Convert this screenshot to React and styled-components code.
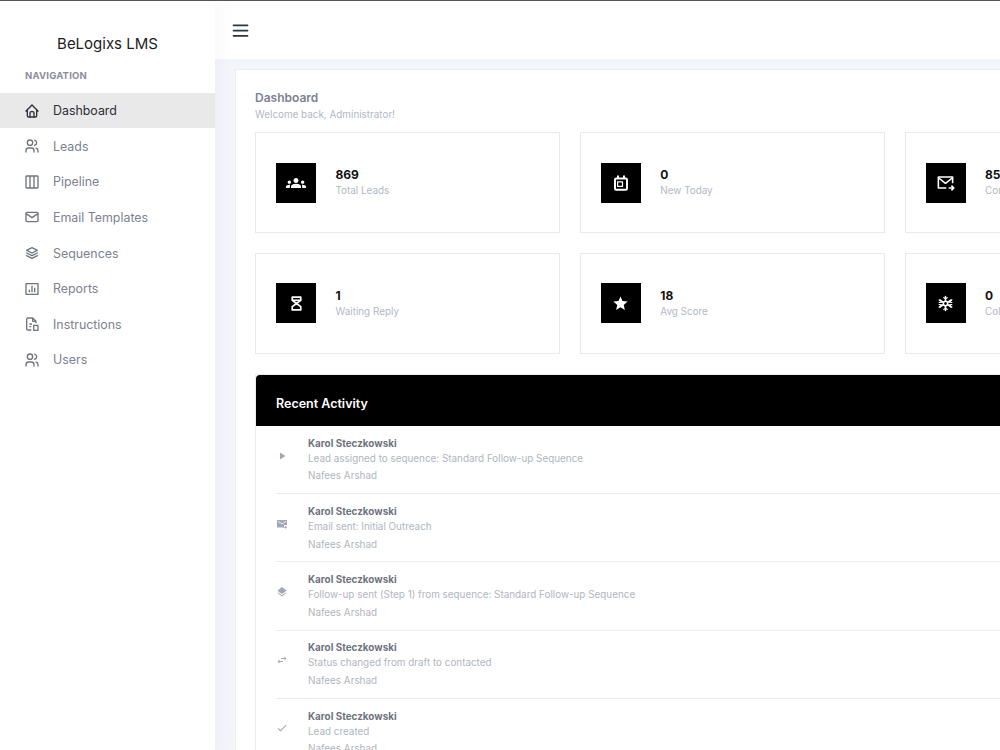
import React from 'react';
import styled, { createGlobalStyle } from 'styled-components';
import {
  TbHome,
  TbUsers,
  TbColumns3,
  TbMail,
  TbStack2,
  TbMenu2,
} from 'react-icons/tb';
import { RiBarChartBoxLine } from 'react-icons/ri';
import {
  MdGroups,
  MdStar,
  MdPlayArrow,
  MdLayers,
  MdSwapHoriz,
  MdCheck,
} from 'react-icons/md';

const GlobalStyle = createGlobalStyle`
  html, body {
    margin: 0;
    height: 100%;
    overflow: hidden;
    background: #f4f4fb;
    font-family: Inter, "Liberation Sans", sans-serif;
  }
  * { box-sizing: border-box; }
`;

const Shell = styled.div`
  display: flex;
  width: 1000px;
  height: 750px;
  overflow: hidden;
  border-top: 1px solid #555;
`;

const Sidebar = styled.aside`
  flex: 0 0 215px;
  background: #fff;
  box-shadow: 0 0 20px rgba(120, 120, 160, 0.08);
  z-index: 1;
`;

const Brand = styled.div`
  padding-top: 33px;
  height: 65px;
  text-align: center;
  font-size: 15px;
  line-height: 20px;
  color: #1c1c22;
`;

const NavTitle = styled.div`
  padding: 3px 25px 0;
  height: 26.9px;
  font-size: 9.5px;
  line-height: 13px;
  font-weight: 700;
  letter-spacing: 0.2px;
  color: #8a8d9c;
`;

const NavItem = styled.div`
  display: flex;
  align-items: center;
  gap: 13px;
  height: 35.6px;
  padding-left: 24px;
  font-size: 12.4px;
  color: ${props => (props.$active ? '#2d2d35' : '#7d8192')};
  background: ${props => (props.$active ? '#e9e9e9' : 'transparent')};
  svg {
    width: 16px;
    height: 16px;
    flex: none;
    color: ${props => (props.$active ? '#2d2d35' : '#70747f')};
  }
`;

const Main = styled.main`
  flex: 1;
  min-width: 0;
`;

const Topbar = styled.header`
  display: flex;
  align-items: center;
  height: 58px;
  padding-left: 14.5px;
  background: #fff;
  color: #2f3247;
  svg {
    width: 21px;
    height: 21px;
  }
`;

const Content = styled.div`
  padding: 10px 0 0 20px;
`;

const Panel = styled.section`
  width: 1300px;
  background: #fff;
  border: 1px solid #ececf2;
  padding: 19px;
`;

const PageTitle = styled.h1`
  margin: 1px 0 0;
  font-size: 12px;
  line-height: 16px;
  font-weight: 600;
  color: #7d8192;
`;

const PageSub = styled.p`
  margin: 1px 0 10.4px;
  font-size: 9.9px;
  line-height: 15px;
  color: #b2b8c4;
`;

const StatGrid = styled.div`
  display: grid;
  grid-template-columns: repeat(4, 304.75px);
  gap: 20px;
`;

const StatCard = styled.div`
  display: flex;
  align-items: center;
  gap: 19.5px;
  height: 100.6px;
  padding: 0 20px;
  border: 1px solid #e9e9e9;
`;

const StatIcon = styled.div`
  display: flex;
  align-items: center;
  justify-content: center;
  width: 40px;
  height: 40px;
  background: #000;
  color: #fff;
  svg {
    width: ${props => props.$size || 18}px;
    height: ${props => props.$size || 18}px;
  }
`;

const StatValue = styled.div`
  font-size: 12px;
  line-height: 16px;
  font-weight: 700;
  color: #111;
`;

const StatLabel = styled.div`
  font-size: 9.9px;
  line-height: 15px;
  color: #b2b8c4;
`;

const Activity = styled.div`
  margin-top: 20px;
  border: 1px solid #ececf2;
`;

const ActivityHead = styled.div`
  height: 51.4px;
  padding: 6px 20px 0;
  display: flex;
  align-items: center;
  background: #000;
  border-radius: 4px 0 0 0;
  color: #fff;
  font-size: 12.5px;
  font-weight: 600;
`;

const ActivityList = styled.div`
  padding: 0 20px;
`;

const ActivityRow = styled.div`
  display: flex;
  align-items: center;
  height: 68.2px;
  border-bottom: 1px solid #ebebeb;
`;

const ActivityIcon = styled.div`
  display: flex;
  flex: 0 0 32px;
  margin-bottom: 8px;
  color: #a3a8b4;
  svg {
    width: 12px;
    height: 12px;
  }
`;

const ActivityName = styled.div`
  font-size: 9.9px;
  line-height: 15px;
  font-weight: 700;
  color: #6f7380;
`;

const ActivityText = styled.div`
  font-size: 9.9px;
  line-height: 15px;
  color: #b0b5c0;
`;

const ActivityUser = styled(ActivityText)`
  margin-top: 2.5px;
`;

const FileIcon = () => (
  <svg viewBox="0 0 24 24" fill="none" stroke="currentColor" strokeWidth="2" strokeLinejoin="round">
    <path d="M11 21H6a2 2 0 0 1-2-2V5a2 2 0 0 1 2-2h7l5 5v3" />
    <path d="M13 3v5h5M8 12h4M8 16h3" />
    <rect x="14.5" y="14" width="6.5" height="7.5" />
  </svg>
);

const CalendarIcon = () => (
  <svg viewBox="0 0 24 24" fill="none" stroke="currentColor" strokeWidth="2.6">
    <rect x="4" y="6" width="16" height="15" rx="1.5" />
    <path d="M8 2v4M16 2v4" />
    <rect x="7.5" y="10.5" width="6.5" height="6" strokeWidth="1.6" />
  </svg>
);

const MailSendIcon = () => (
  <svg viewBox="0 0 24 24" fill="none" stroke="currentColor" strokeWidth="2" strokeLinejoin="round">
    <path d="M13 19H3V5h18v8" />
    <path d="M3 6l9 7 9-7" />
    <path d="M16 19h6M19.5 16l3 3-3 3" />
  </svg>
);

const MailFilledIcon = () => (
  <svg viewBox="0 0 24 24" fill="currentColor">
    <path d="M2 4h20v10h-6v5H2zM4 7.5l8 5 8-5V6l-8 5-8-5z" fillRule="evenodd" />
    <path d="M18 15l4 3.5-4 3.5v-2.5h-3v-2h3z" />
  </svg>
);

const SnowIcon = () => (
  <svg viewBox="0 0 24 24" fill="none" stroke="currentColor" strokeWidth="2.2" strokeLinecap="round">
    <path d="M12 8.5l3 1.75v3.5l-3 1.75-3-1.75v-3.5z" />
    <path d="M12 2v6.5M12 15.5V22M3.3 7l5.7 3.25M15 13.75L20.7 17M3.3 17L9 13.75M15 10.25L20.7 7" />
    <path d="M9.5 3.5L12 5.5l2.5-2M9.5 20.5l2.5-2 2.5 2M3 10.5l3.2-.4-1.2-3M21 10.5l-3.2-.4 1.2-3M3 13.5l3.2.4-1.2 3M21 13.5l-3.2.4 1.2 3" strokeWidth="1.6" />
  </svg>
);

const HourglassIcon = () => (
  <svg viewBox="0 0 24 24" fill="none" stroke="currentColor" strokeWidth="2.4" strokeLinejoin="round">
    <path d="M6 3h12v4.5L12 12l6 4.5V21H6v-4.5l6-4.5-6-4.5z" />
    <path d="M7 7.5h10" />
  </svg>
);

const navItems = [
  { label: 'Dashboard', icon: TbHome, active: true },
  { label: 'Leads', icon: TbUsers },
  { label: 'Pipeline', icon: TbColumns3 },
  { label: 'Email Templates', icon: TbMail },
  { label: 'Sequences', icon: TbStack2 },
  { label: 'Reports', icon: RiBarChartBoxLine },
  { label: 'Instructions', icon: FileIcon },
  { label: 'Users', icon: TbUsers },
];

const stats = [
  { value: '869', label: 'Total Leads', icon: MdGroups, size: 20 },
  { value: '0', label: 'New Today', icon: CalendarIcon },
  { value: '85', label: 'Contacted', icon: MailSendIcon, size: 19 },
  { hidden: true },
  { value: '1', label: 'Waiting Reply', icon: HourglassIcon, size: 17 },
  { value: '18', label: 'Avg Score', icon: MdStar, size: 17 },
  { value: '0', label: 'Cold Leads', icon: SnowIcon, size: 17 },
];

const activity = [
  { text: 'Lead assigned to sequence: Standard Follow-up Sequence', icon: MdPlayArrow },
  { text: 'Email sent: Initial Outreach', icon: MailFilledIcon },
  { text: 'Follow-up sent (Step 1) from sequence: Standard Follow-up Sequence', icon: MdLayers },
  { text: 'Status changed from draft to contacted', icon: MdSwapHoriz },
  { text: 'Lead created', icon: MdCheck },
];

export default function App() {
  return (
    <>
      <GlobalStyle />
      <Shell>
        <Sidebar>
          <Brand>BeLogixs LMS</Brand>
          <NavTitle>NAVIGATION</NavTitle>
          {navItems.map(item => (
            <NavItem key={item.label} $active={item.active}>
              <item.icon />
              {item.label}
            </NavItem>
          ))}
        </Sidebar>
        <Main>
          <Topbar>
            <TbMenu2 />
          </Topbar>
          <Content>
            <Panel>
              <PageTitle>Dashboard</PageTitle>
              <PageSub>Welcome back, Administrator!</PageSub>
              <StatGrid>
                {stats.map((stat, i) =>
                  stat.hidden ? (
                    <div key={i} />
                  ) : (
                    <StatCard key={i}>
                      <StatIcon $size={stat.size}>
                        <stat.icon />
                      </StatIcon>
                      <div>
                        <StatValue>{stat.value}</StatValue>
                        <StatLabel>{stat.label}</StatLabel>
                      </div>
                    </StatCard>
                  )
                )}
              </StatGrid>
              <Activity>
                <ActivityHead>Recent Activity</ActivityHead>
                <ActivityList>
                  {activity.map(row => (
                    <ActivityRow key={row.text}>
                      <ActivityIcon>
                        <row.icon />
                      </ActivityIcon>
                      <div>
                        <ActivityName>Karol Steczkowski</ActivityName>
                        <ActivityText>{row.text}</ActivityText>
                        <ActivityUser>Nafees Arshad</ActivityUser>
                      </div>
                    </ActivityRow>
                  ))}
                </ActivityList>
              </Activity>
            </Panel>
          </Content>
        </Main>
      </Shell>
    </>
  );
}
